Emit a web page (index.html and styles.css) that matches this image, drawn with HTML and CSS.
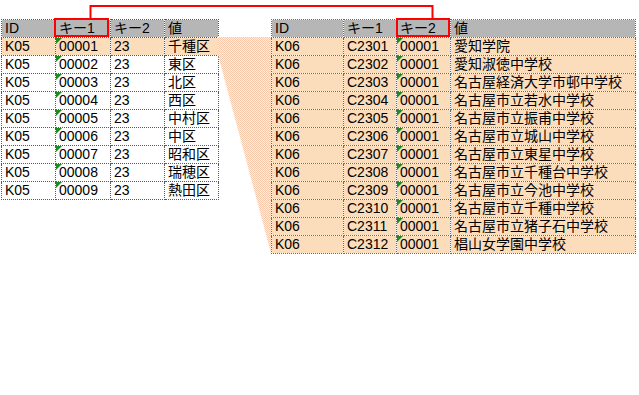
FILE: index.html
```html
<!DOCTYPE html>
<html lang="ja">
<head>
<meta charset="utf-8">
<title>表の結合</title>
<link rel="stylesheet" href="styles.css">
</head>
<body>
<div class="stage">
  <table class="grid left">
    <colgroup><col class="c54"><col class="c55"><col class="c54"><col class="c54"></colgroup>
    <tr class="head"><th>ID</th><th>キー1</th><th>キー2</th><th>値</th></tr>
    <tr class="hl"><td>K05</td><td class="num">00001</td><td>23</td><td>千種区</td></tr>
    <tr><td>K05</td><td class="num">00002</td><td>23</td><td>東区</td></tr>
    <tr><td>K05</td><td class="num">00003</td><td>23</td><td>北区</td></tr>
    <tr><td>K05</td><td class="num">00004</td><td>23</td><td>西区</td></tr>
    <tr><td>K05</td><td class="num">00005</td><td>23</td><td>中村区</td></tr>
    <tr><td>K05</td><td class="num">00006</td><td>23</td><td>中区</td></tr>
    <tr><td>K05</td><td class="num">00007</td><td>23</td><td>昭和区</td></tr>
    <tr><td>K05</td><td class="num">00008</td><td>23</td><td>瑞穂区</td></tr>
    <tr><td>K05</td><td class="num">00009</td><td>23</td><td>熱田区</td></tr>
  </table>
  <table class="grid right">
    <colgroup><col class="c72"><col class="c53"><col class="c54"><col class="c185"></colgroup>
    <tr class="head"><th>ID</th><th>キー1</th><th>キー2</th><th>値</th></tr>
    <tr class="hl"><td>K06</td><td>C2301</td><td class="num">00001</td><td>愛知学院</td></tr>
    <tr class="hl"><td>K06</td><td>C2302</td><td class="num">00001</td><td>愛知淑徳中学校</td></tr>
    <tr class="hl"><td>K06</td><td>C2303</td><td class="num">00001</td><td>名古屋経済大学市邨中学校</td></tr>
    <tr class="hl"><td>K06</td><td>C2304</td><td class="num">00001</td><td>名古屋市立若水中学校</td></tr>
    <tr class="hl"><td>K06</td><td>C2305</td><td class="num">00001</td><td>名古屋市立振甫中学校</td></tr>
    <tr class="hl"><td>K06</td><td>C2306</td><td class="num">00001</td><td>名古屋市立城山中学校</td></tr>
    <tr class="hl"><td>K06</td><td>C2307</td><td class="num">00001</td><td>名古屋市立東星中学校</td></tr>
    <tr class="hl"><td>K06</td><td>C2308</td><td class="num">00001</td><td>名古屋市立千種台中学校</td></tr>
    <tr class="hl"><td>K06</td><td>C2309</td><td class="num">00001</td><td>名古屋市立今池中学校</td></tr>
    <tr class="hl"><td>K06</td><td>C2310</td><td class="num">00001</td><td>名古屋市立千種中学校</td></tr>
    <tr class="hl"><td>K06</td><td>C2311</td><td class="num">00001</td><td>名古屋市立猪子石中学校</td></tr>
    <tr class="hl"><td>K06</td><td>C2312</td><td class="num">00001</td><td>椙山女学園中学校</td></tr>
  </table>
  <svg class="overlay" width="639" height="395" viewBox="0 0 639 395" aria-hidden="true">
    <defs>
      <pattern id="peach" width="2" height="2" patternUnits="userSpaceOnUse">
        <rect width="2" height="2" fill="#fff2cc"/>
        <rect width="1" height="1" fill="#f8c8aa"/>
        <rect x="1" y="1" width="1" height="1" fill="#f8c8aa"/>
      </pattern>
    </defs>
    <polygon points="218,37 271,37 271,253 218,55" fill="url(#peach)"/>
    <path d="M90.5 18 V6 H432.5 V18" fill="none" stroke="#ff0000" stroke-width="2"/>
    <rect x="55" y="19" width="53" height="17" fill="none" stroke="#ff0000" stroke-width="2"/>
    <rect x="397" y="19" width="52" height="17" fill="none" stroke="#ff0000" stroke-width="2"/>
  </svg>
</div>
</body>
</html>
```
FILE: styles.css
```css
html, body {
  margin: 0;
  padding: 0;
  background: #ffffff;
}

.stage {
  position: relative;
  width: 639px;
  height: 395px;
  display: flex;
  align-items: flex-start;
  gap: 52px;
  padding: 19px 0 0 1px;
  box-sizing: border-box;
  font-family: "Liberation Sans", "Noto Sans CJK JP", sans-serif;
  font-size: 14px;
  color: #000000;
}

.grid {
  border-collapse: collapse;
  table-layout: fixed;
  position: relative;
  z-index: 1;
}

.left { width: 218px; }
.right { width: 365px; }

.c54 { width: 54px; }
.c55 { width: 55px; }
.c53 { width: 53px; }
.c72 { width: 72px; }
.c185 { width: 185px; }

.grid th,
.grid td {
  border: 1px dotted #5a5a5a;
  height: 17px;
  padding: 0 0 0 3px;
  line-height: 17px;
  text-align: left;
  font-weight: normal;
  white-space: nowrap;
  overflow: hidden;
  box-sizing: border-box;
  vertical-align: middle;
}

.right th,
.right td {
  border-color: #6a6a6a;
}

.head th {
  background: repeating-conic-gradient(#a6a6a6 0 25%, #c6c6c6 0 50%) 0 0 / 2px 2px;
}

.hl td {
  background: repeating-conic-gradient(#f8c8aa 0 25%, #fff2cc 0 50%) 0 0 / 2px 2px;
}

.num {
  position: relative;
}

.num::before {
  content: "";
  position: absolute;
  left: 0;
  top: 0;
  width: 0;
  height: 0;
  border-top: 6px solid #1f8a1f;
  border-right: 6px solid transparent;
}

.overlay {
  position: absolute;
  left: 0;
  top: 0;
  z-index: 2;
  pointer-events: none;
}
```
